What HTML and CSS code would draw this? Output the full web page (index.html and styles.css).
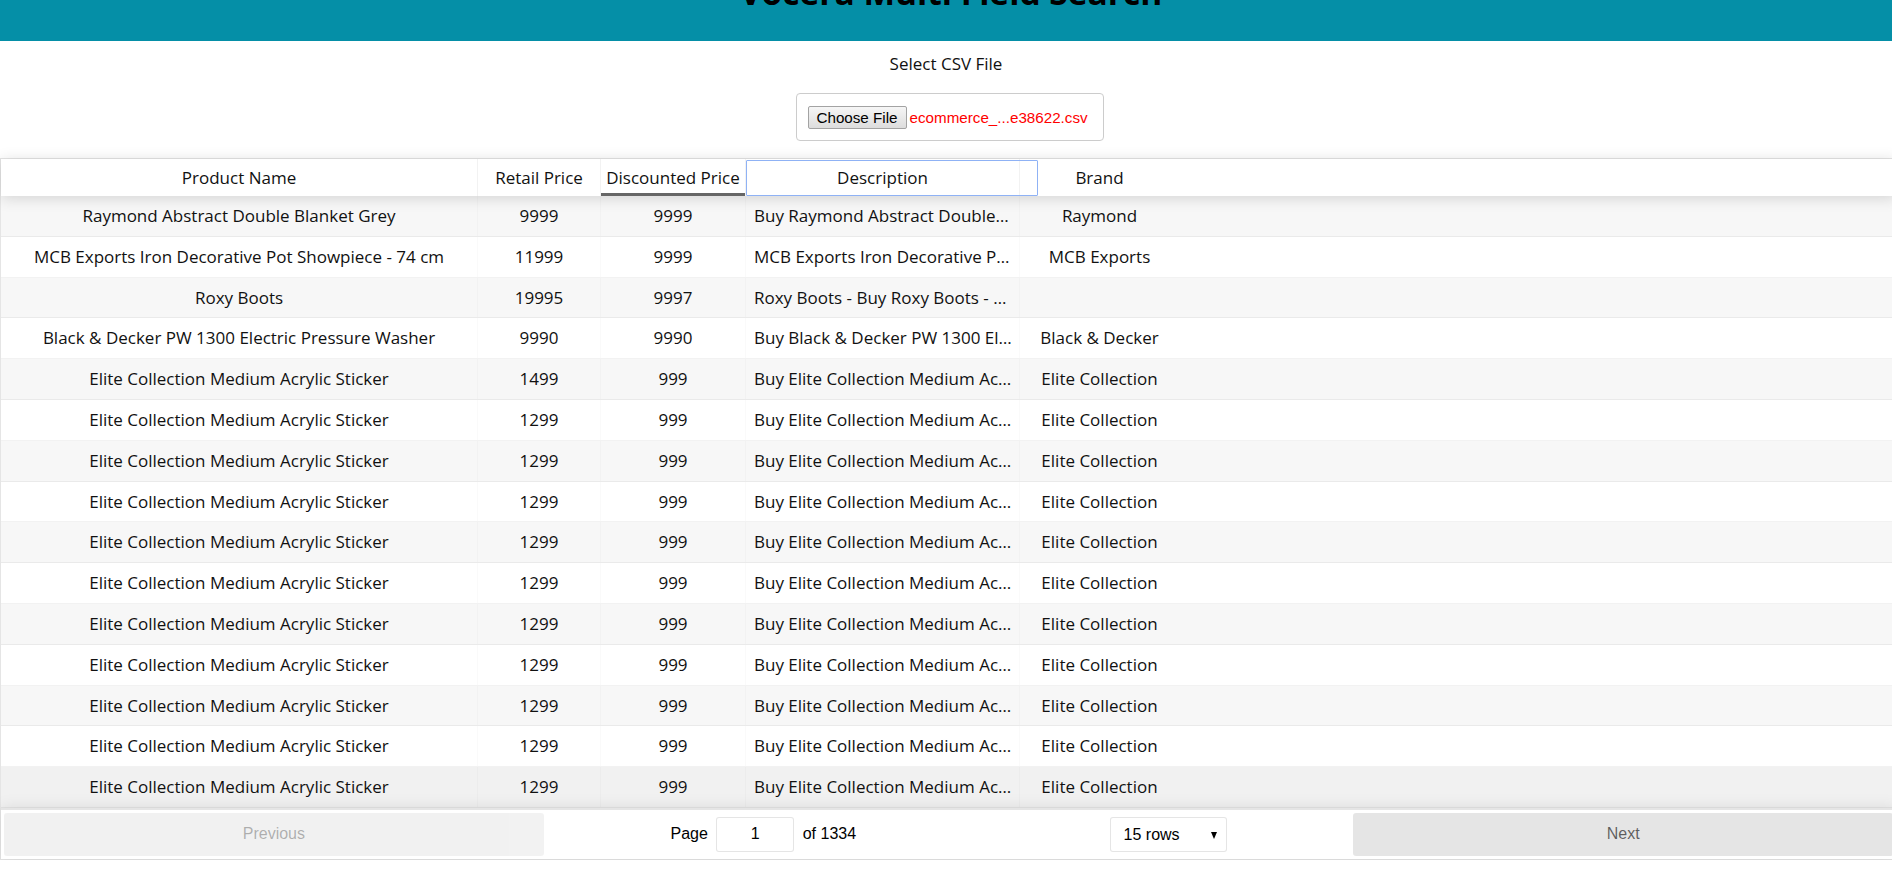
FILE: index.html
```html
<!DOCTYPE html>
<html lang="en">
<head>
<meta charset="utf-8">
<title>Vocera Multi Field Search</title>
<link rel="stylesheet" href="styles.css">
</head>
<body>
<header class="topbar"><h1>Vocera Multi Field Search</h1></header>
<section class="upload">
  <div class="upload-label">Select CSV File</div>
  <div class="file-box">
    <button class="file-btn" type="button">Choose File</button>
    <span class="file-name">ecommerce_...e38622.csv</span>
  </div>
</section>
<div class="table">
  <div class="thead">
    <div class="th c-name">Product Name</div>
    <div class="th c-retail">Retail Price</div>
    <div class="th c-disc sort-desc">Discounted Price</div>
    <div class="th c-desc focused">Description</div>
    <div class="th c-brand">Brand</div>
    <div class="th c-fill"></div>
  </div>
  <div class="tbody">
    <div class="tr odd"><div class="td c-name">Raymond Abstract Double Blanket Grey</div><div class="td c-retail">9999</div><div class="td c-disc">9999</div><div class="td c-desc">Buy Raymond Abstract Double Blanket Grey for Rs.9999 online</div><div class="td c-brand">Raymond</div><div class="td c-fill"></div></div>
    <div class="tr"><div class="td c-name">MCB Exports Iron Decorative Pot Showpiece - 74 cm</div><div class="td c-retail">11999</div><div class="td c-disc">9999</div><div class="td c-desc">MCB Exports Iron Decorative Pot Showpiece - 74 cm</div><div class="td c-brand">MCB Exports</div><div class="td c-fill"></div></div>
    <div class="tr odd"><div class="td c-name">Roxy Boots</div><div class="td c-retail">19995</div><div class="td c-disc">9997</div><div class="td c-desc">Roxy Boots - Buy Roxy Boots - only for Rs.9997</div><div class="td c-brand"></div><div class="td c-fill"></div></div>
    <div class="tr"><div class="td c-name">Black &amp; Decker PW 1300 Electric Pressure Washer</div><div class="td c-retail">9990</div><div class="td c-disc">9990</div><div class="td c-desc">Buy Black &amp; Decker PW 1300 Electric Pressure Washer</div><div class="td c-brand">Black &amp; Decker</div><div class="td c-fill"></div></div>
    <div class="tr odd"><div class="td c-name">Elite Collection Medium Acrylic Sticker</div><div class="td c-retail">1499</div><div class="td c-disc">999</div><div class="td c-desc">Buy Elite Collection Medium Acrylic Sticker</div><div class="td c-brand">Elite Collection</div><div class="td c-fill"></div></div>
    <div class="tr"><div class="td c-name">Elite Collection Medium Acrylic Sticker</div><div class="td c-retail">1299</div><div class="td c-disc">999</div><div class="td c-desc">Buy Elite Collection Medium Acrylic Sticker</div><div class="td c-brand">Elite Collection</div><div class="td c-fill"></div></div>
    <div class="tr odd"><div class="td c-name">Elite Collection Medium Acrylic Sticker</div><div class="td c-retail">1299</div><div class="td c-disc">999</div><div class="td c-desc">Buy Elite Collection Medium Acrylic Sticker</div><div class="td c-brand">Elite Collection</div><div class="td c-fill"></div></div>
    <div class="tr"><div class="td c-name">Elite Collection Medium Acrylic Sticker</div><div class="td c-retail">1299</div><div class="td c-disc">999</div><div class="td c-desc">Buy Elite Collection Medium Acrylic Sticker</div><div class="td c-brand">Elite Collection</div><div class="td c-fill"></div></div>
    <div class="tr odd"><div class="td c-name">Elite Collection Medium Acrylic Sticker</div><div class="td c-retail">1299</div><div class="td c-disc">999</div><div class="td c-desc">Buy Elite Collection Medium Acrylic Sticker</div><div class="td c-brand">Elite Collection</div><div class="td c-fill"></div></div>
    <div class="tr"><div class="td c-name">Elite Collection Medium Acrylic Sticker</div><div class="td c-retail">1299</div><div class="td c-disc">999</div><div class="td c-desc">Buy Elite Collection Medium Acrylic Sticker</div><div class="td c-brand">Elite Collection</div><div class="td c-fill"></div></div>
    <div class="tr odd"><div class="td c-name">Elite Collection Medium Acrylic Sticker</div><div class="td c-retail">1299</div><div class="td c-disc">999</div><div class="td c-desc">Buy Elite Collection Medium Acrylic Sticker</div><div class="td c-brand">Elite Collection</div><div class="td c-fill"></div></div>
    <div class="tr"><div class="td c-name">Elite Collection Medium Acrylic Sticker</div><div class="td c-retail">1299</div><div class="td c-disc">999</div><div class="td c-desc">Buy Elite Collection Medium Acrylic Sticker</div><div class="td c-brand">Elite Collection</div><div class="td c-fill"></div></div>
    <div class="tr odd"><div class="td c-name">Elite Collection Medium Acrylic Sticker</div><div class="td c-retail">1299</div><div class="td c-disc">999</div><div class="td c-desc">Buy Elite Collection Medium Acrylic Sticker</div><div class="td c-brand">Elite Collection</div><div class="td c-fill"></div></div>
    <div class="tr"><div class="td c-name">Elite Collection Medium Acrylic Sticker</div><div class="td c-retail">1299</div><div class="td c-disc">999</div><div class="td c-desc">Buy Elite Collection Medium Acrylic Sticker</div><div class="td c-brand">Elite Collection</div><div class="td c-fill"></div></div>
    <div class="tr odd hover"><div class="td c-name">Elite Collection Medium Acrylic Sticker</div><div class="td c-retail">1299</div><div class="td c-disc">999</div><div class="td c-desc">Buy Elite Collection Medium Acrylic Sticker</div><div class="td c-brand">Elite Collection</div><div class="td c-fill"></div></div>
  </div>
  <div class="pagination">
    <div class="pg-prev"><button class="pg-btn" type="button" disabled>Previous</button></div>
    <div class="pg-center">
      <span class="pg-info">Page <span class="pg-jump"><input type="text" value="1" aria-label="jump to page"></span> of <span class="pg-total">1334</span></span>
      <span class="pg-size"><select aria-label="rows per page"><option>15 rows</option></select></span>
    </div>
    <div class="pg-next"><button class="pg-btn" type="button">Next</button></div>
  </div>
</div>
</body>
</html>
```
FILE: styles.css
```css
* { box-sizing: border-box; }

body {
  margin: 0;
  background: #fff;
  color: #111;
  font-family: "Open Sans", "Noto Sans", sans-serif;
  font-size: 17px;
  overflow: hidden;
}

.topbar {
  height: 41px;
  background: #058fa7;
  overflow: hidden;
  text-align: center;
}

.topbar h1 {
  margin: -26px 0 0 10px;
  font-family: "Open Sans", sans-serif;
  font-weight: 700;
  font-size: 33.5px;
  line-height: 36px;
  color: #000;
}

.upload {
  display: flex;
  flex-direction: column;
  align-items: center;
  padding-top: 12px;
}

.upload-label {
  font-size: 17px;
  line-height: 22px;
  color: #111;
}

.file-box {
  margin: 18px 0 0 7px;
  width: 308px;
  height: 48px;
  border: 1px solid #ccc;
  border-radius: 4px;
  display: flex;
  align-items: center;
  padding: 0 11px;
  gap: 3px;
  font-family: "Liberation Sans", Arial, sans-serif;
  font-size: 15.2px;
}

.file-btn {
  flex: none;
  width: 99px;
  height: 23px;
  padding: 0;
  white-space: nowrap;
  font: 15.2px/21px "Liberation Sans", Arial, sans-serif;
  color: #000;
  background: linear-gradient(#f6f6f6, #dddddd);
  border: 1px solid #a3a3a3;
  border-radius: 2px;
}

.file-name { color: #f00; white-space: nowrap; }

.table {
  margin-top: 17px;
  width: calc(100% + 5px);
  border: 1px solid rgba(0, 0, 0, 0.1);
  display: flex;
  flex-direction: column;
}

.thead {
  display: flex;
  height: 37px;
  position: relative;
  z-index: 2;
  background: #fff;
  box-shadow: 0 2px 15px 0 rgba(0, 0, 0, 0.15);
}

.th {
  position: relative;
  display: flex;
  align-items: center;
  justify-content: center;
  padding: 0 5px;
  white-space: nowrap;
  border-right: 1px solid rgba(0, 0, 0, 0.05);
}

.c-name { width: 477px; flex: none; }
.c-retail { width: 123px; flex: none; }
.c-disc { width: 145px; flex: none; }
.c-desc { width: 274px; flex: none; }
.c-brand { width: 159px; flex: none; }
.th.c-brand, .td.c-brand { border-right: 0; }
.c-fill { flex: 1; border-right: 0; }

.th.sort-desc { box-shadow: inset 0 -3px 0 0 rgba(0, 0, 0, 0.6); }

.th.focused::after {
  content: "";
  position: absolute;
  left: 0;
  top: 1px;
  bottom: 0;
  right: -19px;
  border: 1px solid #8fb2f5;
  border-radius: 1px;
}

.tbody { display: flex; flex-direction: column; }

.tr {
  display: flex;
  height: 40.8px;
  border-bottom: 1px solid rgba(0, 0, 0, 0.05);
}

.tr.odd { background: rgba(0, 0, 0, 0.03); }
.tr.hover { background: rgba(0, 0, 0, 0.055); }

.td {
  padding: 0 5px;
  line-height: 39.8px;
  text-align: center;
  white-space: nowrap;
  overflow: hidden;
  text-overflow: ellipsis;
  border-right: 1px solid rgba(0, 0, 0, 0.02);
}

.td.c-desc { text-align: left; padding-left: 8px; padding-right: 6px; }

.pagination {
  display: flex;
  padding: 3px;
  border-top: 2px solid rgba(0, 0, 0, 0.1);
  box-shadow: 0 0 15px 0 rgba(0, 0, 0, 0.1);
  position: relative;
  z-index: 1;
  font-family: "Liberation Sans", Arial, sans-serif;
  font-size: 16px;
  color: #000;
}

.pg-prev, .pg-next { flex: 1; text-align: center; }

.pg-btn {
  width: 100%;
  height: 43px;
  border: 0;
  border-radius: 3px;
  background: rgba(0, 0, 0, 0.1);
  color: rgba(0, 0, 0, 0.6);
  font: 16px "Liberation Sans", Arial, sans-serif;
}

.pg-btn:disabled { opacity: 0.5; }

.pg-center {
  flex: 1.5;
  display: flex;
  align-items: center;
  justify-content: space-around;
}

.pg-info, .pg-size { margin: 3px 10px; white-space: nowrap; }

.pg-jump { display: inline-block; margin: 0 4px; }

.pg-jump input {
  width: 78px;
  height: 35px;
  border: 1px solid rgba(0, 0, 0, 0.1);
  border-radius: 3px;
  padding: 5px 7px;
  text-align: center;
  font: 16px "Liberation Sans", Arial, sans-serif;
  color: #000;
  vertical-align: middle;
}

.pg-size { position: relative; display: inline-block; }

.pg-size select {
  appearance: none;
  -webkit-appearance: none;
  width: 117px;
  height: 35px;
  padding: 0 13px;
  border: 1px solid rgba(0, 0, 0, 0.1);
  border-radius: 3px;
  background: #fff;
  font: 16px "Liberation Sans", Arial, sans-serif;
  color: #000;
}

.pg-size::after {
  content: "";
  position: absolute;
  right: 10px;
  top: 15px;
  border-left: 3px solid transparent;
  border-right: 3px solid transparent;
  border-top: 7px solid #000;
  pointer-events: none;
}
```
